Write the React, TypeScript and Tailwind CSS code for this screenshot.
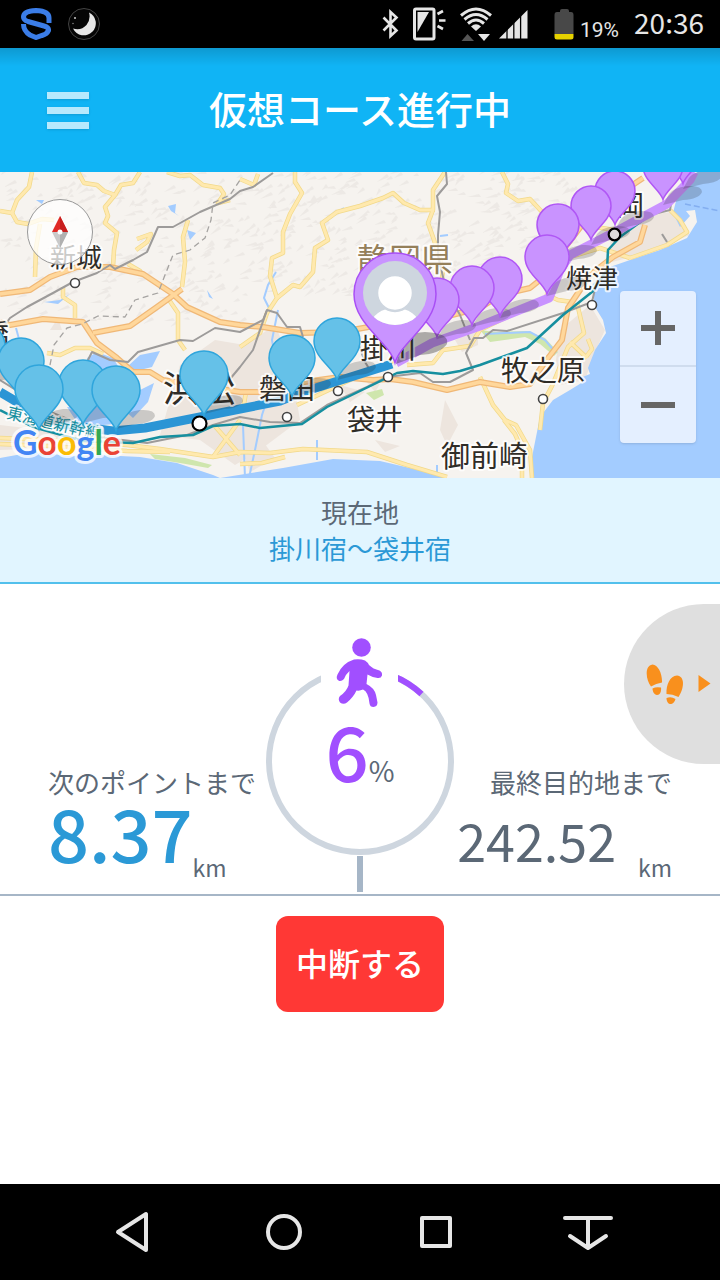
import type { ReactNode } from "react";

type Pin = { x: number; y: number; r: number };

const passedPins: Pin[] = [
  { x: -18, y: 346, r: 23 },
  { x: 21, y: 361, r: 23 },
  { x: 83, y: 384, r: 24 },
  { x: 39, y: 389, r: 24 },
  { x: 116, y: 390, r: 24 },
  { x: 204, y: 375, r: 24 },
  { x: 292, y: 358, r: 23 },
  { x: 337, y: 341, r: 23 },
];

const upcomingPins: Pin[] = [
  { x: 683, y: 150, r: 20 },
  { x: 663, y: 166, r: 20 },
  { x: 615, y: 191, r: 20 },
  { x: 591, y: 206, r: 20 },
  { x: 558, y: 225, r: 21 },
  { x: 547, y: 257, r: 22 },
  { x: 500, y: 279, r: 22 },
  { x: 472, y: 288, r: 22 },
  { x: 437, y: 300, r: 22 },
];

const cities = [
  { name: "新城", x: 50, y: 267, size: 26 },
  { name: "橋", x: -19, y: 345, size: 28 },
  { name: "浜松", x: 163, y: 402, size: 36 },
  { name: "磐田", x: 259, y: 399, size: 28 },
  { name: "掛川", x: 360, y: 359, size: 28 },
  { name: "袋井", x: 347, y: 430, size: 28 },
  { name: "御前崎", x: 441, y: 467, size: 29 },
  { name: "牧之原", x: 501, y: 381, size: 28 },
  { name: "焼津", x: 566, y: 288, size: 26 },
  { name: "岡", x: 616, y: 216, size: 28 },
];

const towns = [
  [75, 283],
  [287, 417],
  [338, 391],
  [388, 377],
  [592, 305],
  [543, 399],
];

const highways = [
  "M0 294L30 290 50 277 77 267 110 267 143 274 173 294 187 307 220 322 240 325 263 327 300 333 340 332 363 328 390 323 440 318 480 308 500 295 530 288 545 276 560 254 592 212 625 190 643 178",
  "M0 322L10 325 43 319 83 322 97 343 117 358 133 372 150 372 163 380 240 392 262 392 297 383 340 377 373 380 390 379 413 382 447 390 480 382 510 387 530 384 545 362 562 340 568 308 590 275 613 257 640 242 645 225",
  "M93 333L130 326 157 307 182 289",
];

const roads = [
  "M0 211L12 213 17 200 29 187 32 172",
  "M12 213L17 222 28 224 42 219 54 220",
  "M78 172L84 183 97 185 104 191 115 195 105 207 108 216 105 223 117 233 114 250 113 267",
  "M115 195L121 185 133 183 140 172",
  "M167 172L180 176 190 175 203 185 220 188 224 194 218 203 230 200",
  "M188 220L183 237 185 262 182 287",
  "M167 297L178 313 178 340 185 350",
  "M137 239L151 234 147 242 136 250",
  "M63 287L63 297 75 305 75 318",
  "M128 264L140 271 143 276",
  "M47 353L60 355 75 348 90 348 103 354",
  "M35 277L36 248 40 224",
  "M295 172L295 182 302 193 290 214 283 232 283 253 272 258 270 276 277 298 267 313 260 333 240 347",
  "M277 298L293 285 300 287 313 272 315 248 328 240 322 223 337 212 360 206 383 198 393 193 404 203 420 210 433 210 433 190 445 172",
  "M433 210L428 223 434 240 443 270 440 295 447 320",
  "M240 179L254 185 258 174",
  "M0 438L50 440 127 445 160 449 213 457 240 452 270 453 303 449 367 452 407 465 447 477",
  "M0 444L50 446 127 451 170 452",
  "M240 464L262 463 285 457",
  "M213 457L240 420",
  "M214 425L240 455",
  "M243 410L246 392",
  "M502 172L508 184 506 193 518 201 530 199 543 213",
  "M480 377L493 405 505 420 516 425 530 450 532 478",
  "M504 420L515 434 522 450 522 478",
  "M540 430L543 403 552 386 568 347 584 333 577 303",
  "M570 342L587 358",
  "M588 339L592 349 586 357",
  "M630 258L667 245 687 232 680 220 670 210",
  "M407 365L433 363 443 350 470 346 480 330 540 301",
  "M297 405L350 380 393 361",
  "M545 294L558 300 572 302",
  "M552 270L570 257 600 248 630 258",
  "M582 225L615 230",
];

const railways = [
  "M0 332L10 318 27 307 53 293 73 282 97 273 110 265 115 269 133 260 147 252 158 227 173 227 200 212 230 199 240 191 253 187 273 173",
  "M87 362L92 352 110 360 128 362 138 352 180 340 193 341 215 328 240 332 263 320 267 310 277 313 287 327 300 327 303 337",
  "M225 385L240 367 253 350 267 310",
  "M0 380L53 413 70 420 90 436 147 443 187 435 213 425 240 417 270 422 300 423 327 405 367 387 387 377 420 373 433 382 450 382 473 370 466 353 474 338 483 338 493 330 507 331 563 313 592 302 597 280",
  "M446 172L447 184 437 196 440 212 438 235 438 255 446 290 460 315 470 340",
  "M613 237L650 215 670 210 672 198 693 173",
  "M662 234L667 242",
  "M355 335L365 362 370 370",
];

/** Small strokes that give the northern hills their relief. */
function hillShading(): string {
  let seed = 11;
  const next = () => {
    seed = (seed * 16807) % 2147483647;
    return seed / 2147483647;
  };
  let d = "";
  for (let i = 0; i < 620; i++) {
    const x = next() * 570;
    const limit = x < 240 ? 155 : x < 480 ? 125 : 90;
    const y = 172 + next() * limit;
    const w = 3 + next() * 9;
    const h = 2 + next() * 7;
    d += `M${x.toFixed(0)} ${y.toFixed(0)}l${w.toFixed(0)} -${h.toFixed(0)}l2 3z`;
  }
  return d;
}

function MapPin({ pin, fill, stroke }: { pin: Pin; fill: string; stroke: string }) {
  const { x, y, r } = pin;
  const tip = y + r * 1.68;
  return (
    <path
      d={`M${x} ${tip}C${x - r * 0.15} ${y + r * 1.15} ${x - r} ${y + r * 0.75} ${x - r} ${y}A${r} ${r} 0 0 1 ${x + r} ${y}C${x + r} ${y + r * 0.75} ${x + r * 0.15} ${y + r * 1.15} ${x} ${tip}Z`}
      fill={fill}
      stroke={stroke}
      strokeWidth="1.5"
    />
  );
}

function PinShadow({ pin }: { pin: Pin }) {
  const x = pin.x + 22;
  const y = pin.y + 27;
  return (
    <g fill="#222" opacity="0.2">
      <path
        d={`M${pin.x} ${pin.y + 39}L${x - 16} ${y + 1}Q${x - 12} ${y - 5} ${x + 2} ${y - 7}Q${x + 17} ${y - 8} ${x + 17} ${y - 1}Q${x + 14} ${y + 6} ${x - 2} ${y + 7}Z`}
      />
    </g>
  );
}

function CourseMap() {
  return (
    <svg
      className="block h-full w-full"
      viewBox="0 172 720 306"
      preserveAspectRatio="xMidYMid slice"
      role="img"
      aria-label="コース地図"
      fontFamily='"Noto Sans CJK JP", sans-serif'
    >
      <rect x="0" y="172" width="720" height="306" fill="#f6f3ef" />
      <path d={hillShading()} fill="#e9e6e2" opacity="0.75" />
      <g fill="#ede5de">
        <path d="M180 365L215 340 245 345 275 325 290 360 300 420 260 450 235 465 200 440 160 435 170 400Z" />
        <path d="M0 340L25 355 40 372 20 385 0 380ZM0 425L60 432 60 448 0 450Z" />
        <path d="M560 330L590 305 605 330 595 352 585 380 560 385 556 360ZM610 240L645 215 672 212 690 235 640 255 612 262Z" />
        <path d="M245 425L262 440 275 458 250 472 244 455ZM340 385L365 392 350 402ZM445 400L458 425 450 440 463 455 455 463 440 430Z" />
        <path d="M455 340L478 330 478 345 462 352ZM365 380L380 384 375 392ZM50 330L58 318 62 330ZM375 440L400 446 385 452Z" />
      </g>
      <g fill="#cfe6ad">
        <path d="M366 393L382 389 384 395 374 400ZM480 330L495 332 527 331 545 338 558 352 554 356 540 344 525 337 490 342Z" />
        <path d="M150 454L185 458 212 465 208 468 180 463 155 459Z" />
      </g>
      <g fill="#a3ccff">
        <path d="M0 458L33 452 70 456 100 455 140 457 177 463 213 475 220 478 0 478Z" />
        <path d="M220 478L283 468 333 459 380 461 427 472 445 478Z" />
        <path d="M533 478L532 457 540 417 553 400 570 390 583 382 580 378 590 374 588 368 595 350 606 333 603 320 595 307 592 285 610 267 630 260 660 250 687 238 697 222 695 210 686 211 690 216 680 227 673 213 677 197 693 177 697 172 720 172 720 478Z" />
        <path d="M87 358L97 352 113 358 118 366 104 374 92 370ZM128 366L140 355 160 351 152 367 136 371ZM67 407L100 407 115 424 80 427ZM140 390L154 383 148 402 133 418 122 408Z" />
        <path d="M168 206L176 204 175 213 179 216 171 211ZM187 230L196 233 190 240ZM207 290L213 299 209 297ZM36 200L44 200 42 204ZM44 302L60 300 70 294 58 304Z" />
      </g>
      <g fill="none" stroke="#a3ccff" strokeWidth="2">
        <path d="M278 310L272 340 277 370 262 415 255 450 249 478M270 310L264 298 268 285 276 272M245 478L243 425M317 440V460M437 465V478M16 328L22 350 40 372M338 212L344 208M440 236L448 235M485 334L505 333 530 332 545 340 556 353" />
      </g>
      <path d="M685 204L700 207 720 211" fill="none" stroke="#83aef0" strokeWidth="1.5" strokeDasharray="6 3" />
      <g fill="none" stroke="#f2d98a" strokeWidth="4.500" strokeLinejoin="round">
        {roads.map((d) => (
          <path key={d} d={d} />
        ))}
      </g>
      <g fill="none" stroke="#ffe9ae" strokeWidth="3" strokeLinejoin="round">
        {roads.map((d) => (
          <path key={d} d={d} />
        ))}
      </g>
      <g fill="none" stroke="#f0b877" strokeWidth="6" strokeLinejoin="round">
        {highways.map((d) => (
          <path key={d} d={d} />
        ))}
      </g>
      <g fill="none" stroke="#ffd79b" strokeWidth="3.500" strokeLinejoin="round">
        {highways.map((d) => (
          <path key={d} d={d} />
        ))}
      </g>
      <g fill="none" stroke="#9d9b9a" strokeWidth="2" strokeLinejoin="round">
        {railways.map((d) => (
          <path key={d} d={d} />
        ))}
        <path
          d="M50 365L54 345 67 328 82 324 98 316 125 317 135 300 158 293 165 275 173 255 190 250 205 238 211 220 213 203 230 195 240 180"
          stroke="#a5a3a1"
          strokeWidth="1.300"
          strokeDasharray="6 4"
        />
      </g>
      <path
        d="M0 410L33 427 83 441 133 443 160 437 193 435 213 426 240 424 260 428 302 424 327 407 397 373 413 371 443 374 460 371 480 365 527 348 563 315 592 292 607 270 608 250 620 237 647 217"
        fill="none"
        stroke="#168f9f"
        strokeWidth="2.500"
        strokeLinejoin="round"
      />
      <path d="M0 392L17 402 60 424 113 431 145 428 240 409 280 401 303 392 392 364" fill="none" stroke="#2b95d5" strokeWidth="9" strokeLinejoin="round" />
      <path d="M396 363L432 343 480 326 549 298 560 270 570 255 613 233 667 204 690 180 694 172" fill="none" stroke="#c993ff" strokeWidth="9" strokeLinejoin="round" />
      <g fill="#fff" stroke="#444" strokeWidth="1.6">
        {towns.map(([cx, cy]) => (
          <circle key={cx} cx={cx} cy={cy} r="4.5" />
        ))}
      </g>
      <g stroke="#fff" strokeWidth="4" strokeLinejoin="round" paintOrder="stroke" strokeOpacity="0.8">
        <text x="357" y="271" fontSize="32" fill="#95805a">
          静岡県
        </text>
        {cities.map((c) => (
          <text key={c.name} x={c.x} y={c.y} fontSize={c.size} fill="#2f2c27">
            {c.name}
          </text>
        ))}
        <text x="6" y="418" fontSize="16" fill="#168f9f" transform="rotate(13 6 418)">
          東海道新幹線
        </text>
      </g>
      {passedPins.map((p) => (
        <PinShadow key={p.x} pin={p} />
      ))}
      {upcomingPins.map((p) => (
        <PinShadow key={p.x} pin={p} />
      ))}
      <g stroke="#000" strokeWidth="2.2">
        <circle cx="199.500" cy="423.500" r="7" fill="#fff" />
        <circle cx="614.500" cy="234.500" r="5.800" fill="#ddd" />
      </g>
      {passedPins.map((p) => (
        <MapPin key={p.x} pin={p} fill="#65c1e8" stroke="#2fa5dc" />
      ))}
      {upcomingPins.map((p) => (
        <MapPin key={p.x} pin={p} fill="#c993ff" stroke="#b057f5" />
      ))}
      <path d="M396 364L402 345Q404 333 425 332Q450 333 447 344Q440 354 420 355Z" fill="#222" opacity="0.35" />
      <MapPin pin={{ x: 395, y: 294, r: 41 }} fill="#c993ff" stroke="#a94ff5" />
      <clipPath id="avatar">
        <circle cx="395" cy="293" r="32" />
      </clipPath>
      <g clipPath="url(#avatar)">
        <rect x="363" y="261" width="64" height="64" fill="#ced6df" />
        <ellipse cx="395" cy="325" rx="24" ry="17" fill="#fff" />
        <circle cx="395" cy="293" r="18" fill="#fff" stroke="#ced6df" strokeWidth="2.500" />
      </g>
      <text
        x="13"
        y="455"
        fontFamily='"Lato", sans-serif'
        fontSize="34"
        fontWeight="700"
        stroke="#fff"
        strokeOpacity="0.75"
        strokeWidth="6"
        strokeLinejoin="round"
        paintOrder="stroke"
      >
        <tspan fill="#4285f4">G</tspan>
        <tspan fill="#ea4335">o</tspan>
        <tspan fill="#fbbc05">o</tspan>
        <tspan fill="#4285f4">g</tspan>
        <tspan fill="#34a853">l</tspan>
        <tspan fill="#ea4335">e</tspan>
      </text>
    </svg>
  );
}

function StatusBar() {
  return (
    <div className="flex h-12 items-center justify-between bg-black pl-5 pr-4 text-[#e6e6e6]">
      <div className="flex items-center gap-4">
        <svg className="h-8 w-8" viewBox="20 8 32 32" fill="none" stroke="#3b7de8" strokeWidth="5" aria-hidden="true">
          <path d="M49 23V18Q49 11 36 10.500Q23.500 11 23.500 17Q23.500 20 28 21.500L44 26Q49 27.500 48.500 30.500Q47 34 42 35.500L36 37.500L30 35Q23.500 31 23.500 24" />
        </svg>
        <svg className="h-8 w-8" viewBox="68 8 32 32" aria-hidden="true">
          <circle cx="84" cy="24" r="15.500" fill="#050505" stroke="#444" />
          <path d="M89 12.500A12 12 0 1 1 73 28.500Q81 31 86.500 25Q91 19 89 12.500Z" fill="#e6e6e6" />
          <circle cx="75" cy="18" r="1" fill="#ccc" />
          <circle cx="73" cy="23.500" r="0.700" fill="#999" />
        </svg>
      </div>
      <div className="flex items-center">
        <svg className="h-10 w-[240px]" viewBox="380 4 240 40" aria-hidden="true">
          <path d="M382.500 17.500L395.500 30.500 389.500 36V12L395.500 17.500 382.500 30.500" fill="none" stroke="#e6e6e6" strokeWidth="2.600" />
          <rect x="413.500" y="9" width="19.500" height="30" rx="1.500" fill="none" stroke="#e6e6e6" strokeWidth="3" />
          <path d="M416.500 12H428L416.500 32Z" fill="#e6e6e6" />
          <path d="M436.500 14L442 11M438 20.500H444.500M436.500 26L442 29" stroke="#e6e6e6" strokeWidth="2.600" />
          <g fill="none" stroke="#e6e6e6" strokeWidth="3">
            <path d="M460 15.500Q475 2.500 490 15.500M463.500 19.500Q475 9.500 486.500 19.500M467 23.500Q475 16.500 483 23.500" />
          </g>
          <path d="M470 26.500Q475 22 480 26.500L475 31Z" fill="#e6e6e6" />
          <path d="M460.500 41L466.500 34 473 41Z" fill="#555" />
          <path d="M477 34H489L483 41Z" fill="#e6e6e6" />
          <path d="M498 38.500L526.500 10V38.500Z" fill="#e6e6e6" />
          <path d="M506 10V40M512.800 10V40M519.600 10V40" stroke="#000" strokeWidth="1.300" />
          <path d="M559 11Q559 9 561 9H566Q568 9 568 11V12H570Q572.500 12 572.500 15V34H553.500V15Q553.500 12 556 12H559Z" fill="#484848" />
          <path d="M553.500 34H572.500V37Q572.500 39.500 570 39.500H556Q553.500 39.500 553.500 37Z" fill="#e6d200" />
          <text x="579" y="37" fontFamily="Roboto, sans-serif" fontSize="21" fill="#e6e6e6">
            19%
          </text>
        </svg>
        <time className="pl-[13px] pb-1 font-['Noto_Sans_CJK_JP',sans-serif] text-[28px] leading-10">20:36</time>
      </div>
    </div>
  );
}

function NavButton({ label, children }: { label: string; children: ReactNode }) {
  return (
    <button type="button" aria-label={label} className="flex h-24 w-[152px] items-center justify-center">
      <svg
        className="h-12 w-14"
        viewBox="0 0 56 48"
        fill="none"
        stroke="#e6e6e6"
        strokeWidth="4"
        strokeLinejoin="round"
        strokeLinecap="round"
        aria-hidden="true"
      >
        {children}
      </svg>
    </button>
  );
}

function ProgressRing() {
  return (
    <div className="grid">
      <svg className="col-start-1 row-start-1 h-[258px] w-full" viewBox="266 636 188 258" aria-hidden="true">
        <clipPath id="ring-gap">
          <path d="M260 650H321V740H398V650H460V860H260Z" />
        </clipPath>
        <g clipPath="url(#ring-gap)" fill="none" strokeWidth="6">
          <circle cx="360" cy="761" r="91" stroke="#ced6df" />
          <path d="M360 670A91 91 0 0 1 421.500 694" stroke="#a14fff" />
        </g>
        <rect x="357" y="856" width="6" height="36" fill="#a6b6c7" />
        <circle cx="361.500" cy="647.500" r="9.300" fill="#a14fff" />
        <path
          d="M354 659.500Q360 658.500 365 660.500Q368 662.500 369 665Q373 669 379.500 670.500Q382.500 672 382 675.500Q381 678.500 377.500 678Q371.500 677 367.500 674.500L366.500 684Q374.500 688 376 695L377.500 702.500Q377.500 706.500 373.500 707Q370 707 369.500 703.500Q368.500 692 363 689.500Q360 691 356.500 690.500Q353.500 697 347 702.500Q343.500 705 340 702.500Q337.500 699 340 696Q346.500 691.500 348.500 685.500L349.500 671Q346 674 344 679Q341 682 338.500 680.500Q335.500 678.500 337.500 674.500Q342.500 663 354 659.500Z"
          fill="#a14fff"
        />
      </svg>
      <p className="col-start-1 row-start-1 flex items-baseline justify-center self-start pt-[77px]">
        <span className="text-[76px] font-medium leading-[72px] text-[#a14fff]">6</span>
        <span className="text-[28px] leading-8">%</span>
      </p>
    </div>
  );
}

export default function App() {
  return (
    <div className="flex min-h-screen flex-col bg-white font-['Noto_Sans_CJK_JP',sans-serif] text-[#5b6876]">
      <StatusBar />
      <header className="grid h-[124px] grid-cols-[1fr_auto_1fr] items-center bg-[#10b4f5] bg-[linear-gradient(to_bottom,rgba(0,0,0,0.15),transparent_18px)] px-[47px] text-white">
        <button type="button" aria-label="メニュー" className="flex w-[42px] flex-col gap-2">
          <span className="h-[7px] bg-[#b7e9fd] shadow-sm" />
          <span className="h-[7px] bg-[#b7e9fd] shadow-sm" />
          <span className="h-[7px] bg-[#b7e9fd] shadow-sm" />
        </button>
        <h1 className="pb-1 text-[38px] font-medium leading-[56px]">仮想コース進行中</h1>
      </header>

      <section className="relative h-[306px] overflow-hidden">
        <CourseMap />
        <button
          type="button"
          aria-label="北を上にする"
          className="absolute left-[27px] top-[27px] flex size-[66px] items-center justify-center rounded-full border border-[#999] bg-white/75"
        >
          <svg className="h-8 w-4" viewBox="0 0 16 32" aria-hidden="true">
            <path d="M8 0L16 16H0Z" fill="#e02a25" />
            <path d="M8 0L16 16H8Z" fill="#c81e1e" />
            <path d="M0 16H16L8 32Z" fill="#c9c9c9" />
            <path d="M8 16H16L8 32Z" fill="#b0b0b0" />
            <circle cx="8" cy="16" r="2.500" fill="#fff" />
          </svg>
        </button>
        <div className="absolute bottom-[35px] right-6 flex w-[76px] flex-col divide-y-2 divide-[#cfdcee] rounded-sm bg-[#e4efff] shadow">
          <button type="button" aria-label="拡大" className="flex h-[76px] items-center justify-center">
            <svg className="size-[34px]" viewBox="0 0 34 34" stroke="#666" strokeWidth="6" aria-hidden="true">
              <path d="M0 17H34M17 0V34" />
            </svg>
          </button>
          <button type="button" aria-label="縮小" className="flex h-[76px] items-center justify-center">
            <svg className="size-[34px]" viewBox="0 0 34 34" stroke="#666" strokeWidth="6" aria-hidden="true">
              <path d="M0 17H34" />
            </svg>
          </button>
        </div>
      </section>

      <section className="flex h-[106px] flex-col items-center border-b-2 border-[#52c0ec] bg-[#e1f5ff] pt-4 text-[26px] leading-9">
        <h2>現在地</h2>
        <p className="text-[#2b99d6]">掛川宿～袋井宿</p>
      </section>

      <main className="flex flex-1 flex-col">
        <section className="relative grid grid-cols-[minmax(0,1fr)_188px_minmax(0,1fr)] items-end border-b-2 border-[#a6b6c7] pt-[52px]">
          <div className="pb-2 pl-12">
            <h3 className="whitespace-nowrap text-[26px] leading-8">次のポイントまで</h3>
            <p className="flex h-[88px] items-end justify-between pr-11">
              <span className="pb-[18px] text-[72px] font-medium leading-[72px] text-[#2b99d6]">8.37</span>
              <span className="pb-px text-[23px] leading-9">km</span>
            </p>
          </div>
          <ProgressRing />
          <div className="flex flex-col items-end pb-2 pr-12">
            <h3 className="whitespace-nowrap text-[26px] leading-8">最終目的地まで</h3>
            <p className="flex h-[88px] items-end gap-[22px]">
              <span className="pb-[18px] text-[52px] leading-[56px]">242.52</span>
              <span className="pb-px text-[23px] leading-9">km</span>
            </p>
          </div>
          <button
            type="button"
            aria-label="歩数を見る"
            className="absolute right-0 top-5 flex h-40 w-24 items-center justify-end rounded-l-full bg-[#dfdfdf] pr-[9px]"
          >
            <svg className="h-10 w-[66px]" viewBox="645 664 66 40" fill="#f9901d" aria-hidden="true">
              <path d="M652.500 664.500C658 664.500 662.500 674 662 682.500Q656 683.500 651 686.500C646 680 644 666 652.500 664.500Z" />
              <path d="M652.500 688.500Q656 686.500 661 687.500C661.500 691.500 660 695 657 695C654 695 652.500 691 652.500 688.500Z" />
              <path d="M677 675.500C685 676 684.500 688 678.500 697Q672.500 694 666.500 694C666 685 670 675.500 677 675.500Z" />
              <path d="M666.500 698Q671 696 675.500 699C674.500 702.500 672 704.500 670 704C667.500 703.500 666.500 700.500 666.500 698Z" />
              <path d="M698.500 675L710.500 683.500 698.500 692Z" />
            </svg>
          </button>
        </section>
        <button
          type="button"
          className="mx-auto mt-5 h-24 w-[168px] rounded-xl bg-[#ff3835] pb-1 text-[32px] font-medium leading-[48px] text-white"
        >
          中断する
        </button>
      </main>

      <nav className="flex h-24 justify-center bg-black">
        <NavButton label="戻る">
          <path d="M42 6V42L14 24Z" />
        </NavButton>
        <NavButton label="ホーム">
          <circle cx="28" cy="24" r="16" />
        </NavButton>
        <NavButton label="履歴">
          <path d="M14 10H42V38H14Z" />
        </NavButton>
        <NavButton label="バーを隠す">
          <path d="M5 10H51M28 10V40M10 28L28 40 46 28" />
        </NavButton>
      </nav>
    </div>
  );
}
